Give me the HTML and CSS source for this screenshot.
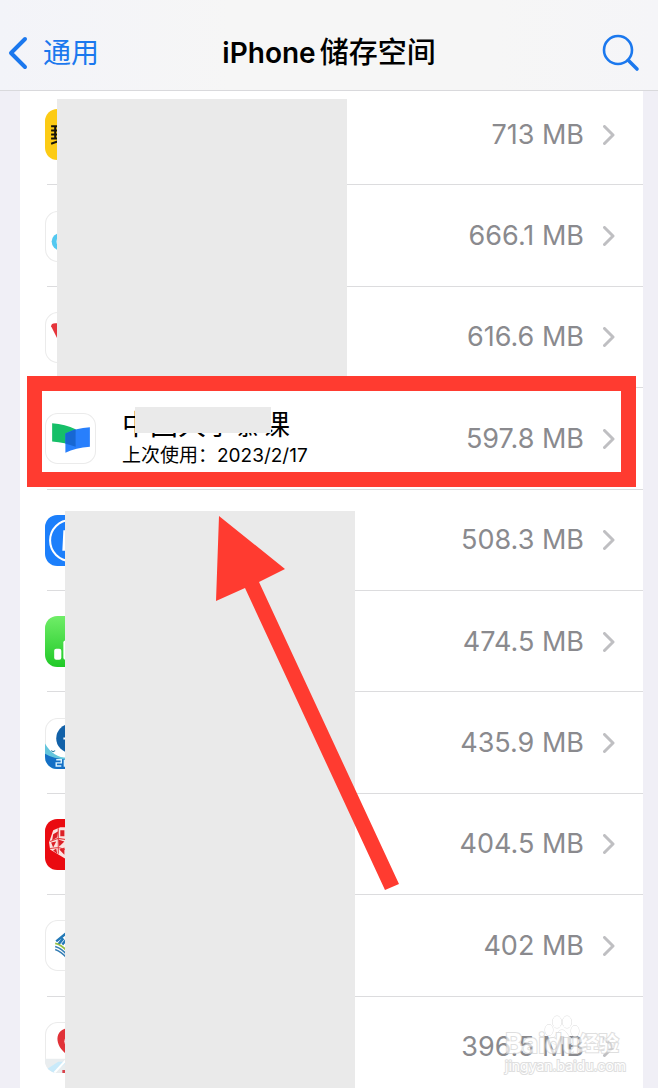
FILE: index.html
```html
<!DOCTYPE html>
<html lang="zh-CN">
<head>
<meta charset="utf-8">
<meta name="viewport" content="width=device-width, initial-scale=1">
<title>iPhone储存空间</title>
<link rel="stylesheet" href="styles.css">
</head>
<body>
<div class="screen">
  <header class="navbar">
    <a class="back" href="#">
      <svg class="back-icon" viewBox="0 0 20 34" aria-hidden="true"><path d="M17 3 3 17l14 14" fill="none" stroke="currentColor" stroke-width="4" stroke-linecap="round" stroke-linejoin="round"/></svg>
      <span>通用</span>
    </a>
    <h1 class="title">iPhone<span class="title-cn">储存空间</span></h1>
    <button class="search" type="button" aria-label="搜索">
      <svg viewBox="0 0 38 38" aria-hidden="true"><g fill="none" stroke="currentColor" stroke-linecap="round"><circle cx="16" cy="16" r="14" stroke-width="2.6"/><path d="m26.500 26.500 8.500 8.500" stroke-width="3.600"/></g></svg>
    </button>
  </header>

  <main class="content">
    <ul class="apps">
      <li class="app"><a class="row" href="#">
        <svg class="icon" viewBox="0 0 50 50" aria-hidden="true"><rect width="50" height="50" rx="12" fill="#fccb14"/><g fill="none" stroke="#17140a" stroke-width="2"><path d="M6 17h10M6 21h10M6 25h10M6 29h10M10 16v14M6 34l6-2 4 1"/></g></svg>
        <span class="size">713 MB</span><svg class="chevron" viewBox="0 0 12 20" aria-hidden="true"><path d="m1.500 1.500 8.500 8.500-8.500 8.500"/></svg>
      </a></li>
      <li class="app"><a class="row" href="#">
        <svg class="icon" viewBox="0 0 50 50" aria-hidden="true"><rect class="plate" x=".5" y=".5" width="49" height="49" rx="12"/><circle cx="15" cy="30" r="8.500" fill="#53c8f0"/><circle cx="16" cy="30" r="5" fill="#b7e9f9"/></svg>
        <span class="size">666.1 MB</span><svg class="chevron" viewBox="0 0 12 20" aria-hidden="true"><path d="m1.500 1.500 8.500 8.500-8.500 8.500"/></svg>
      </a></li>
      <li class="app"><a class="row" href="#">
        <svg class="icon" viewBox="0 0 50 50" aria-hidden="true"><rect class="plate" x=".5" y=".5" width="49" height="49" rx="12"/><path d="M6 14q0-3 4-3h6v21q-2-3-4-6Z" fill="#e5353b"/></svg>
        <span class="size">616.6 MB</span><svg class="chevron" viewBox="0 0 12 20" aria-hidden="true"><path d="m1.500 1.500 8.500 8.500-8.500 8.500"/></svg>
      </a></li>
      <li class="app app-current"><a class="row" href="#">
        <svg class="icon" viewBox="0 0 50 50" aria-hidden="true"><rect class="plate" x=".5" y=".5" width="49" height="49" rx="12"/><path d="M7 10q13 1 23 6v17q-10-4-23-5Z" fill="#16bf68"/><path d="M20 20q10-5 24-6v19q-14 1-24 6Z" fill="#287ffc"/><path d="M20 20q5-2 10-4v17l-10-3Z" fill="#1767d3"/></svg>
        <span class="info"><span class="name">中国大学慕课</span><span class="used">上次使用：2023/2/17</span></span>
        <span class="size">597.8 MB</span><svg class="chevron" viewBox="0 0 12 20" aria-hidden="true"><path d="m1.500 1.500 8.500 8.500-8.500 8.500"/></svg>
      </a><span class="name-mask"></span><span class="frame"></span></li>
      <li class="app"><a class="row" href="#">
        <svg class="icon" viewBox="0 0 50 50" aria-hidden="true"><rect width="50" height="50" rx="12" fill="#1c7ffb"/><circle cx="25" cy="25" r="20" fill="none" stroke="#fff" stroke-width="2"/><path d="M18 15h14v4H21l-1 16h-3Z" fill="#fff"/></svg>
        <span class="size">508.3 MB</span><svg class="chevron" viewBox="0 0 12 20" aria-hidden="true"><path d="m1.500 1.500 8.500 8.500-8.500 8.500"/></svg>
      </a></li>
      <li class="app"><a class="row" href="#">
        <svg class="icon" viewBox="0 0 50 50" aria-hidden="true"><defs><linearGradient id="green" x2="0" y2="1"><stop stop-color="#70ed68"/><stop offset="1" stop-color="#20c927"/></linearGradient></defs><rect width="50" height="50" rx="12" fill="url(#green)"/><rect x="9" y="32" width="7" height="11" rx="2" fill="#fff"/><rect x="18" y="24" width="7" height="19" rx="2" fill="#fff"/><rect x="27" y="15" width="7" height="28" rx="2" fill="#fff"/></svg>
        <span class="size">474.5 MB</span><svg class="chevron" viewBox="0 0 12 20" aria-hidden="true"><path d="m1.500 1.500 8.500 8.500-8.500 8.500"/></svg>
      </a></li>
      <li class="app"><a class="row" href="#">
        <svg class="icon" viewBox="0 0 50 50" aria-hidden="true"><defs><clipPath id="tile"><rect width="50" height="50" rx="12"/></clipPath></defs><rect class="plate" x=".5" y=".5" width="49" height="49" rx="12"/><g clip-path="url(#tile)"><path d="M0 25q8 14 22 14h28v11H0Z" fill="#63c5dc"/><path d="M0 35q8 5 22 6h28v9H0Z" fill="#146fc5"/><circle cx="25" cy="20" r="14" fill="#1261a8"/><path d="M18 20h12" stroke="#fff" stroke-width="2"/><path d="M11 41h5v3h-5v3h5m3-6v6h4" fill="none" stroke="#d8f2ff" stroke-width="1.400"/><path d="m6 32 2 1 2-1" stroke="#287fa3" fill="none"/></g></svg>
        <span class="size">435.9 MB</span><svg class="chevron" viewBox="0 0 12 20" aria-hidden="true"><path d="m1.500 1.500 8.500 8.500-8.500 8.500"/></svg>
      </a></li>
      <li class="app"><a class="row" href="#">
        <svg class="icon" viewBox="0 0 50 50" aria-hidden="true"><rect width="50" height="50" rx="12" fill="#ea0b11"/><path d="m8 11 7-3h18l12 17-25 14L5 30l-1-7Z" fill="#fbe3e0"/><g fill="#dc2027"><path d="m8 15 5-3-1 6-5 3ZM15 11h4v6h-4ZM6 23l5-1-3 6ZM13 20l6 2-5 5ZM14 30l5-2v7ZM8 31l3-2 1 5Z"/></g><path d="m5 22 8-3 7 1M5 29l8-1 7 2M13 9v25" fill="none" stroke="#e33a3e"/></svg>
        <span class="size">404.5 MB</span><svg class="chevron" viewBox="0 0 12 20" aria-hidden="true"><path d="m1.500 1.500 8.500 8.500-8.500 8.500"/></svg>
      </a></li>
      <li class="app"><a class="row" href="#">
        <svg class="icon" viewBox="0 0 50 50" aria-hidden="true"><rect class="plate" x=".5" y=".5" width="49" height="49" rx="12"/><g fill="none" stroke-width="2.400"><path d="m11 21 11-9M13 24l5-6M17 24l5-6" stroke="#2379b7"/><path d="M10 23q6 1 12 8" stroke="#97bf42" stroke-width="1.800"/><path d="M10 26q7 2 12 9M10 29q6 2 12 9" stroke="#347db4" stroke-width="1.500"/></g></svg>
        <span class="size">402 MB</span><svg class="chevron" viewBox="0 0 12 20" aria-hidden="true"><path d="m1.500 1.500 8.500 8.500-8.500 8.500"/></svg>
      </a></li>
      <li class="app"><a class="row" href="#">
        <svg class="icon" viewBox="0 0 50 50" aria-hidden="true"><rect class="plate" x=".5" y=".5" width="49" height="49" rx="12"/><g clip-path="url(#tile)"><path d="M0 36h50v14H0Z" fill="#e9edef"/><path d="m2 46 11-7h9L9 50Z" fill="#c9eafa"/><path d="m9 50 11-12" stroke="#fff" stroke-width="2"/><path d="M25 6c-17 0-16 18-3 26l3 2 3-2C41 24 42 6 25 6Z" fill="#e13238"/><circle cx="25" cy="19" r="6" fill="#fff"/><path d="M17 47h6v3h-6Z" fill="#d9434b"/></g></svg>
        <span class="size">396.5 MB</span><svg class="chevron" viewBox="0 0 12 20" aria-hidden="true"><path d="m1.500 1.500 8.500 8.500-8.500 8.500"/></svg>
      </a></li>
    </ul>
    <div class="mask mask-top"></div>
    <div class="mask mask-bottom"></div>
    <svg class="arrow" viewBox="0 0 184 374" aria-hidden="true"><path d="m3 0 66 53-26 13 140 302-14 6L29 72 0 85Z" fill="#ff3b30"/></svg>
  </main>

  <div class="watermark">
    <svg class="paw" viewBox="0 0 36 30" aria-hidden="true"><g fill="#fff" stroke="#cfcfcf"><ellipse cx="13" cy="7" rx="4.500" ry="6"/><ellipse cx="23" cy="7" rx="4.500" ry="6"/><ellipse cx="5" cy="15" rx="4" ry="5.500"/><ellipse cx="31" cy="16" rx="4" ry="5.500"/><path d="M18 15c-4 0-5 5-9 8-3 3-1 6 3 6h12c5 0 6-3 3-6-4-3-5-8-9-8Z"/></g></svg>
    <span class="brand">Baidu<span class="brand-cn">经验</span></span>
    <span class="site">jingyan.baidu.com</span>
  </div>
</div>
</body>
</html>
```
FILE: styles.css
```css
* {
  box-sizing: border-box;
}

body {
  margin: 0;
  font-family: Inter, "Noto Sans CJK SC", sans-serif;
  color: #000;
  background: #f0eff6;
}

a {
  color: inherit;
  text-decoration: none;
}

.screen {
  position: relative;
  display: flex;
  flex-direction: column;
  height: 100vh;
  overflow: hidden;
}

.navbar {
  z-index: 5;
  display: grid;
  grid-template-columns: 1fr auto 1fr;
  align-items: center;
  flex: none;
  height: 91px;
  padding: 16px 8px 0;
  background: linear-gradient(90deg, #f3f4f9, #f6f6f6 35%, #f6f6f6 75%, #f5f5f8);
  border-bottom: 1px solid #d9d9dc;
}

.back {
  display: flex;
  align-items: center;
  gap: 15px;
  font-size: 28px;
  line-height: 40px;
  color: #1b78ee;
}

.back-icon {
  width: 20px;
  height: 34px;
}

.title {
  display: flex;
  align-items: center;
  gap: 4px;
  margin: 0;
  font-size: 28px;
  font-weight: 600;
  line-height: 40px;
}

.title-cn {
  font-size: 29px;
  font-weight: 500;
}

.search {
  justify-self: end;
  width: 38px;
  height: 38px;
  margin-right: 10px;
  padding: 0;
  color: #1b78ee;
  background: none;
  border: 0;
}

.search svg {
  display: block;
}

.content {
  position: relative;
  flex: 1;
  min-height: 0;
  margin: 0 15px 0 20px;
  background: #fff;
}

.apps {
  display: grid;
  grid-template-rows: repeat(10, 1fr);
  height: 1014px;
  margin: -7px 0 0;
  padding: 0;
  list-style: none;
}

.app {
  position: relative;
}

.app::after {
  content: "";
  position: absolute;
  right: 0;
  bottom: 0;
  left: 27px;
  height: 1px;
  background: #dcdcde;
}

.app-current {
  z-index: 2;
}

.row {
  display: flex;
  align-items: center;
  height: 100%;
  padding: 0 28px 0 25px;
}

.icon {
  flex: none;
  width: 51px;
  height: 51px;
}

.plate {
  fill: #fff;
  stroke: #ebebeb;
}

.info {
  display: flex;
  flex-direction: column;
  margin-left: 26px;
}

.name {
  font-size: 28px;
  line-height: 34px;
}

.used {
  font-size: 19px;
  line-height: 28px;
}

.size {
  margin-left: auto;
  font-size: 27px;
  line-height: 36px;
  color: #8a8a8e;
}

.chevron {
  width: 12px;
  height: 20px;
  margin-left: 19px;
  fill: none;
  stroke: #bfbfc2;
  stroke-width: 3px;
  stroke-linecap: round;
  stroke-linejoin: round;
}

.name-mask {
  position: absolute;
  top: 19px;
  left: 115px;
  width: 136px;
  height: 26px;
  background: #eaeaea;
}

.frame {
  position: absolute;
  z-index: 1;
  inset: -12px 7px 3px;
  border: 15px solid #ff3b30;
  pointer-events: none;
}

.mask {
  position: absolute;
  width: 290px;
  background: #eaeaea;
}

.mask-top {
  top: 8px;
  left: 37px;
  height: 278px;
}

.mask-bottom {
  top: 420px;
  bottom: 0;
  left: 45px;
}

.arrow {
  position: absolute;
  top: 425px;
  left: 196px;
  width: 184px;
  height: 374px;
}

.watermark {
  position: absolute;
  right: 36px;
  bottom: 14px;
  display: flex;
  flex-direction: column;
  width: 117px;
  color: #fff;
  opacity: 0.7;
  paint-order: stroke fill;
  -webkit-text-stroke: 2px #d2d2d2;
}

.paw {
  position: absolute;
  top: -15px;
  left: 39px;
  width: 36px;
  height: 30px;
}

.brand {
  display: flex;
  align-items: center;
  position: relative;
  font-size: 27px;
  font-weight: 600;
  line-height: 28px;
}

.brand-cn {
  font-size: 20px;
}

.site {
  font-size: 14px;
  line-height: 16px;
}
```
